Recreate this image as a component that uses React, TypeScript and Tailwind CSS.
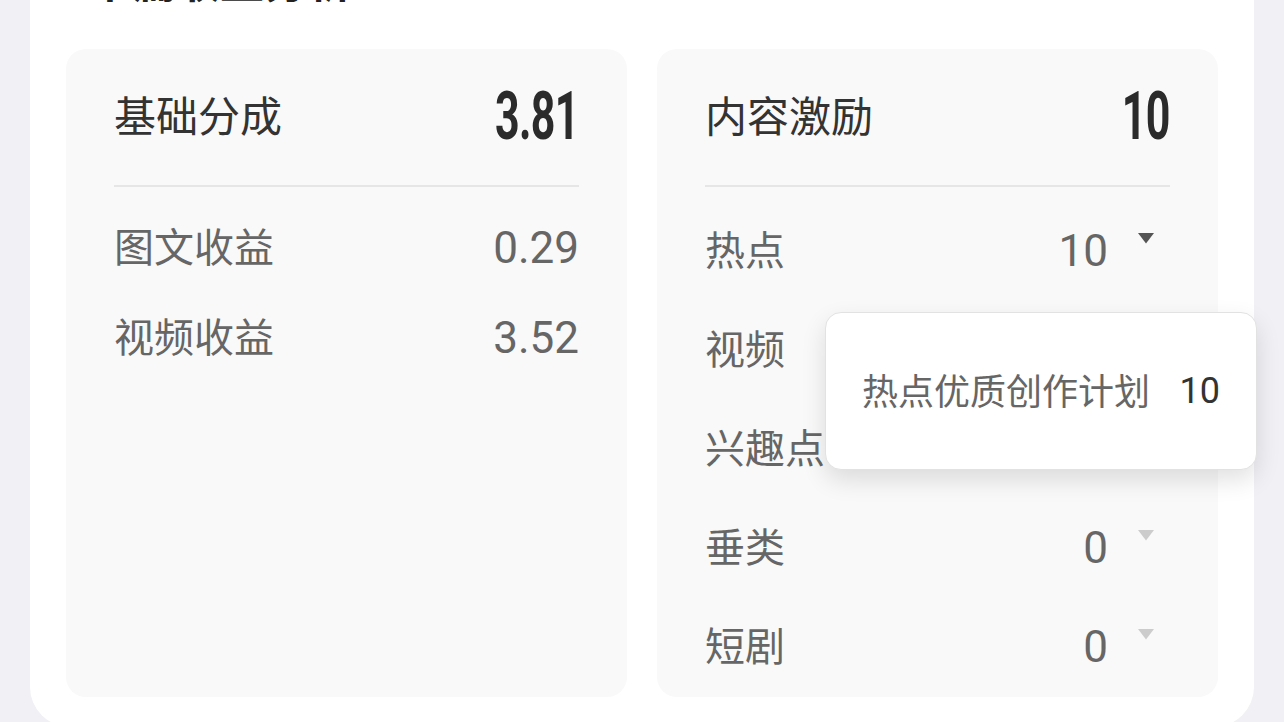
import React from 'react'

interface IIncomeRow {
  label: string
  value: string
  active?: boolean
}

const BASE_ROWS: IIncomeRow[] = [
  { label: '图文收益', value: '0.29' },
  { label: '视频收益', value: '3.52' },
]

const INCENTIVE_ROWS: IIncomeRow[] = [
  { label: '热点', value: '10', active: true },
  { label: '视频', value: '0' },
  { label: '兴趣点', value: '0' },
  { label: '垂类', value: '0' },
  { label: '短剧', value: '0' },
]

const cjk = "font-['Noto_Sans_CJK_SC','Noto_Sans',sans-serif]"
const num = "font-['Roboto','Liberation_Sans',sans-serif]"

const Caret = ({ active }: { active?: boolean }) => (
  <svg width="18" height="12" viewBox="0 0 18 12" className="mt-[3px]">
    <path d="M1 1h16L9 11.5z" fill={active ? '#555555' : '#cccccc'} strokeLinejoin="round" />
  </svg>
)

const CardHeader = ({ title, total }: { title: string; total: string }) => (
  <>
    <div className="h-[136px] flex items-center justify-between">
      <span className={`${cjk} text-[42px] leading-none text-[#333] pb-[6px]`}>{title}</span>
      <span
        className={`${num} text-[66px] leading-none font-bold text-[#2b2b2b] scale-x-[0.65] origin-right tracking-[-1px]`}>
        {total}
      </span>
    </div>
    <div className="h-[2px] bg-[#e6e6e6]" />
  </>
)

export default function App() {
  return (
    <div className="w-[1284px] h-[722px] overflow-hidden bg-[#f0f0f5] px-[30px]">
      <div className="bg-white rounded-[40px] -mt-[61px] pt-[14px] px-[36px] pb-[30px]">
        <h1 className={`${cjk} text-[44px] leading-[52px] font-bold text-[#222] pl-[22px]`}>
          单篇收益分析
        </h1>

        <div className="grid grid-cols-2 gap-[30px] mt-[44px]">
          {/* base share */}
          <div className="h-[648px] rounded-[20px] bg-[#f9f9f9] px-[48px]">
            <CardHeader title="基础分成" total="3.81" />
            <div className="pt-[16px]">
              {BASE_ROWS.map((row) => (
                <div key={row.label} className="h-[90px] flex items-center justify-between">
                  <span className={`${cjk} text-[40px] leading-none text-[#666] pb-[6px]`}>{row.label}</span>
                  <span className={`${num} text-[44px] leading-none text-[#666]`}>{row.value}</span>
                </div>
              ))}
            </div>
          </div>

          {/* content incentive */}
          <div className="relative h-[648px] rounded-[20px] bg-[#f9f9f9] px-[48px]">
            <CardHeader title="内容激励" total="10" />
            <div className="pt-[14px]">
              {INCENTIVE_ROWS.map((row) => (
                <div key={row.label} className="h-[99px] flex items-center justify-between">
                  <span className={`${cjk} text-[40px] leading-none text-[#666] pb-[6px]`}>{row.label}</span>
                  <div className="flex items-start pr-[15px]">
                    <span className={`${num} text-[44px] leading-none text-[#666]`}>{row.value}</span>
                    <span className="ml-[29px]">
                      <Caret active={row.active} />
                    </span>
                  </div>
                </div>
              ))}
            </div>

            {/* breakdown popover for 热点 */}
            <div className="absolute left-[168px] top-[263px] z-10 w-[432px] h-[158px] flex items-center justify-between px-[36px] bg-white rounded-[16px] border border-[#e2e2e2] shadow-[0_10px_24px_rgba(0,0,0,0.12)]">
              <span className={`${cjk} text-[36px] leading-none text-[#666] pb-[4px]`}>热点优质创作计划</span>
              <span className={`${num} text-[36px] leading-none text-[#333]`}>10</span>
            </div>
          </div>
        </div>
      </div>
    </div>
  )
}
